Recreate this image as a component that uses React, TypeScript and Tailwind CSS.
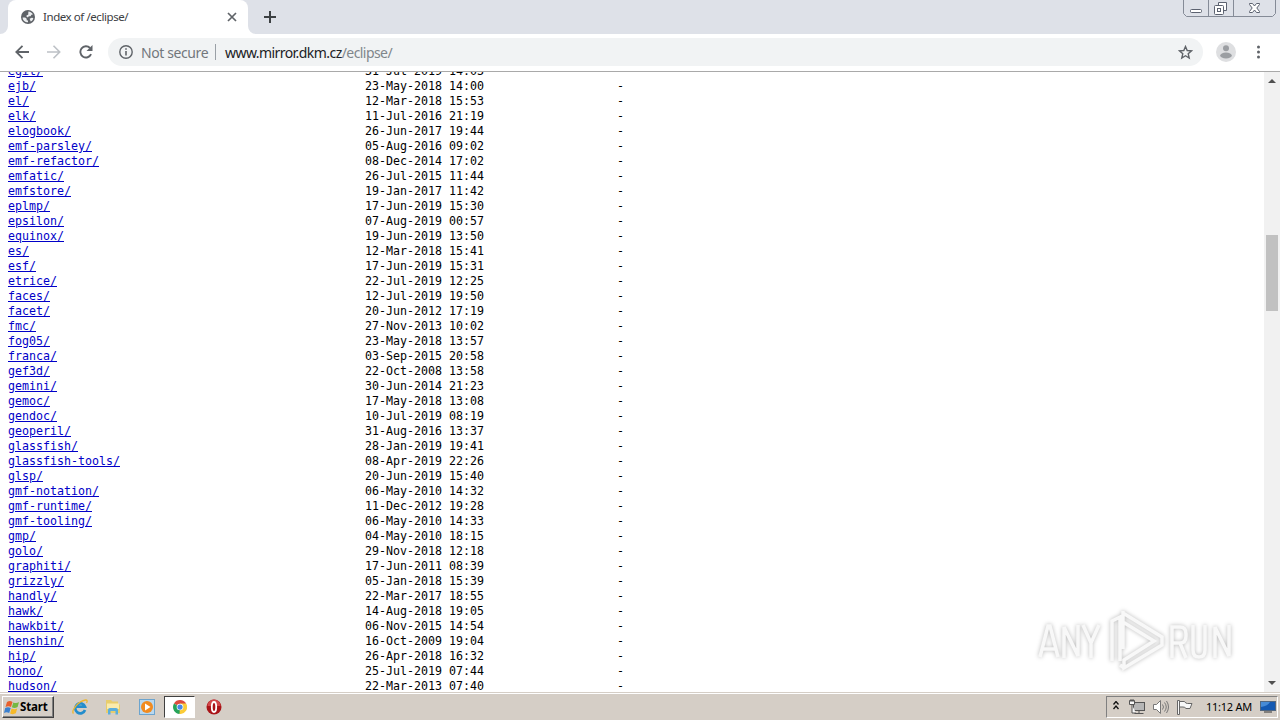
import type { ReactNode } from "react";

type Entry = [name: string, date: string];

const entries: Entry[] = [
  ["egit/", "31-Jul-2019 14:03"],
  ["ejb/", "23-May-2018 14:00"],
  ["el/", "12-Mar-2018 15:53"],
  ["elk/", "11-Jul-2016 21:19"],
  ["elogbook/", "26-Jun-2017 19:44"],
  ["emf-parsley/", "05-Aug-2016 09:02"],
  ["emf-refactor/", "08-Dec-2014 17:02"],
  ["emfatic/", "26-Jul-2015 11:44"],
  ["emfstore/", "19-Jan-2017 11:42"],
  ["eplmp/", "17-Jun-2019 15:30"],
  ["epsilon/", "07-Aug-2019 00:57"],
  ["equinox/", "19-Jun-2019 13:50"],
  ["es/", "12-Mar-2018 15:41"],
  ["esf/", "17-Jun-2019 15:31"],
  ["etrice/", "22-Jul-2019 12:25"],
  ["faces/", "12-Jul-2019 19:50"],
  ["facet/", "20-Jun-2012 17:19"],
  ["fmc/", "27-Nov-2013 10:02"],
  ["fog05/", "23-May-2018 13:57"],
  ["franca/", "03-Sep-2015 20:58"],
  ["gef3d/", "22-Oct-2008 13:58"],
  ["gemini/", "30-Jun-2014 21:23"],
  ["gemoc/", "17-May-2018 13:08"],
  ["gendoc/", "10-Jul-2019 08:19"],
  ["geoperil/", "31-Aug-2016 13:37"],
  ["glassfish/", "28-Jan-2019 19:41"],
  ["glassfish-tools/", "08-Apr-2019 22:26"],
  ["glsp/", "20-Jun-2019 15:40"],
  ["gmf-notation/", "06-May-2010 14:32"],
  ["gmf-runtime/", "11-Dec-2012 19:28"],
  ["gmf-tooling/", "06-May-2010 14:33"],
  ["gmp/", "04-May-2010 18:15"],
  ["golo/", "29-Nov-2018 12:18"],
  ["graphiti/", "17-Jun-2011 08:39"],
  ["grizzly/", "05-Jan-2018 15:39"],
  ["handly/", "22-Mar-2017 18:55"],
  ["hawk/", "14-Aug-2018 19:05"],
  ["hawkbit/", "06-Nov-2015 14:54"],
  ["henshin/", "16-Oct-2009 19:04"],
  ["hip/", "26-Apr-2018 16:32"],
  ["hono/", "25-Jul-2019 07:44"],
  ["hudson/", "22-Mar-2013 07:40"],
];

function GlobeIcon() {
  return (
    <svg className="ml-[13px] size-[14px]" viewBox="0 0 14 14">
      <circle cx="7" cy="7" r="7" fill="#5f6368" />
      <path
        d="M1.600 7.400h2.600l1.500 1.400v1.500l1.300.2v1.800C4 12.300 1.700 10.200 1.600 7.400ZM7.400 1.600c2 .2 3.700 1.300 4.500 3l-1.500.2-.8 1.400H7.800l-.9 1.200-1.500-.8.3-1.300 1.500-.5ZM8.600 8.700l2-.9 1.700.1c-.2 1.600-1.200 3-2.600 3.700Z"
        fill="#eceef0"
      />
    </svg>
  );
}

function BrowserTab() {
  return (
    <div className="relative ml-2 flex h-[34px] w-[240px] items-center rounded-t-lg bg-white">
      <GlobeIcon />
      <span className="ml-2 w-[86px] text-[11.5px] tracking-[-0.43px] whitespace-nowrap text-[#3c4043]">
        Index of /eclipse/
      </span>
      <svg className="ml-[98px] size-[10px]" viewBox="0 0 10 10" stroke="#5f6368" strokeWidth="1.700">
        <path d="m1 1 8 8M9 1 1 9" />
      </svg>
      <svg className="absolute bottom-0 -left-2 size-2" viewBox="0 0 8 8">
        <path d="M8 0v8H0a8 8 0 0 0 8-8Z" fill="#fff" />
      </svg>
      <svg className="absolute -right-2 bottom-0 size-2" viewBox="0 0 8 8">
        <path d="M0 0v8h8a8 8 0 0 1-8-8Z" fill="#fff" />
      </svg>
    </div>
  );
}

function WindowControls() {
  return (
    <svg
      className="mr-1 ml-auto h-[17px] w-[93px] self-start"
      viewBox="0 0 93 17"
      fill="none"
      stroke="#5c6270"
    >
      <path d="M.5 0v13.500l3 3h86l3-3V0M25.500 0v16M50.500 0v16" stroke="#858b97" />
      <rect x="7.500" y="9.500" width="11" height="3" rx="1" fill="#fff" />
      <path d="M35.500 5.500v-3h8v8h-3" fill="#fff" />
      <rect x="31.500" y="5.500" width="9" height="9" rx="1" fill="#fff" />
      <rect x="34.500" y="8.500" width="3" height="3" />
      <path
        d="M66.500 3.500h3l2 2.500 2-2.500h3v1l-2.700 3.500 2.700 3.500v1h-3l-2-2.500-2 2.500h-3v-1l2.700-3.500-2.700-3.500Z"
        fill="#fff"
      />
    </svg>
  );
}

function TabStrip() {
  return (
    <div className="flex h-[34px] bg-[#dee1e8]">
      <BrowserTab />
      <svg className="mt-[11px] ml-4 size-3" viewBox="0 0 12 12" stroke="#3c4043" strokeWidth="2">
        <path d="M6 0v12M0 6h12" />
      </svg>
      <WindowControls />
    </div>
  );
}

function Toolbar() {
  return (
    <div className="flex h-[38px] items-center border-b border-[#a9a9a9] bg-white pb-px">
      <svg className="ml-[15px] size-[14px]" viewBox="0 0 14 14" fill="none" stroke="#5f6368" strokeWidth="1.800">
        <path d="M14 7H1.500M7.500.8 1.300 7l6.200 6.200" />
      </svg>
      <svg className="ml-[18px] size-[14px]" viewBox="0 0 14 14" fill="none" stroke="#bdc1c6" strokeWidth="1.600">
        <path d="M0 7h12.500M6.500.8 12.700 7l-6.200 6.200" />
      </svg>
      <svg className="ml-[18px] size-[14px]" viewBox="0 0 14 14">
        <path d="M12.100 9.200A5.600 5.600 0 1 1 11 3" fill="none" stroke="#5f6368" strokeWidth="1.900" />
        <path d="M13.500 0v6h-6Z" fill="#5f6368" />
      </svg>
      <div className="ml-[15px] flex h-7 w-[1095px] items-center rounded-full bg-[#f1f3f4] text-[14px]">
        <svg className="ml-[11px] size-[14px]" viewBox="0 0 14 14" fill="none" stroke="#5f6368" strokeWidth="1.400">
          <circle cx="7" cy="7" r="6.200" />
          <path d="M7 6v4.500M7 3.300v1.500" strokeWidth="1.600" />
        </svg>
        <span className="ml-2 w-[74px] tracking-[-0.400px] whitespace-nowrap text-[#73777c]">
          Not secure
        </span>
        <span className="mr-[9px] h-4 w-px bg-[#9aa0a6]" />
        <span className="tracking-[-0.560px] whitespace-nowrap text-[#202124]">
          www.mirror.dkm.cz<span className="text-[#80868b]">/eclipse/</span>
        </span>
        <svg
          className="mr-[10px] ml-auto size-[15px]"
          viewBox="0 0 15 15"
          fill="none"
          stroke="#5f6368"
          strokeWidth="1.400"
        >
          <path d="m7.500 1.500 1.700 4 4.300.4-3.300 2.800 1 4.300-3.700-2.300L3.800 13l1-4.300L1.500 5.900l4.300-.4Z" />
        </svg>
      </div>
      <svg className="ml-[13px] size-5" viewBox="0 0 20 20">
        <circle cx="10" cy="10" r="10" fill="#dedfe1" />
        <circle cx="10" cy="6.200" r="3" fill="#9b9ea2" />
        <ellipse cx="10" cy="13.500" rx="5.800" ry="3" fill="#9b9ea2" />
      </svg>
      <svg className="ml-[21px] h-[14px] w-1" viewBox="0 0 4 14" fill="#5f6368">
        <circle cx="1.500" cy="2" r="1.500" />
        <circle cx="1.500" cy="7" r="1.500" />
        <circle cx="1.500" cy="12" r="1.500" />
      </svg>
    </div>
  );
}

function Listing() {
  return (
    <div className="-mt-2 min-w-0 flex-1 pl-2 font-['DejaVu_Sans_Mono',monospace] text-[11.63px] leading-[15px] text-black">
      {entries.map(([name, date]) => (
        <div key={name} className="flex h-[15px] whitespace-pre">
          <span className="w-[357px]">
            <a className="text-[#0000c8] underline underline-offset-1">{name}</a>
          </span>
          <span className="w-[252px]">{date}</span>
          <span>-</span>
        </div>
      ))}
    </div>
  );
}

function Scrollbar() {
  return (
    <div className="flex w-4 flex-col items-center bg-[#f1f1f1]">
      <svg className="mt-[7px] h-1 w-2" viewBox="0 0 8 4" fill="#505050">
        <path d="M0 4h8L4 0Z" />
      </svg>
      <div className="mt-[152px] h-[76px] w-3 bg-[#c1c1c1]" />
      <svg className="mt-auto mb-[7px] h-1 w-2" viewBox="0 0 8 4" fill="#505050">
        <path d="M0 0h8L4 4Z" />
      </svg>
    </div>
  );
}

function Watermark() {
  return (
    <svg
      className="absolute right-8 bottom-[14px] h-[74px] w-[220px] drop-shadow-[0_0_2px_rgba(0,0,0,0.28)]"
      viewBox="0 0 220 74"
      fill="none"
      stroke="#f8f8f8"
      strokeWidth="3.500"
    >
      <path d="m12 53 8-31h2l8 31M15 45h12M36 54V23l14 29V21M55 21l8 18 8-18M63 38v16" />
      <path d="M84 57V17l8-4v44M95 7v38M95 9l39 24v8L96 64v-8l30-19-31-19M96 64l-4-3" />
      <path d="M144 54V23h8q6 0 6 7v2q0 7-6 7h-8M152 39l6 15M165 21v25q0 7 6 7t6-7V21M187 54V23l14 29V21" />
    </svg>
  );
}

function TaskButton({ children }: { children: ReactNode }) {
  return <div className="flex h-[22px] w-[33px] items-center justify-center">{children}</div>;
}

function StartButton() {
  return (
    <div className="mt-[3px] ml-[2px] flex h-[22px] w-[52px] items-center border border-t-white border-r-[#404040] border-b-[#404040] border-l-white bg-[#d5cec6] shadow-[inset_-1px_-1px_#808080]">
      <svg className="ml-px h-[15px] w-4" viewBox="0 0 16 15">
        <path d="M3 2q3-2 5.500 0L7 7Q4.500 5.500 1.500 7Z" fill="#e8602c" />
        <path d="M9.300 2.400q3 1.500 5.700-.3L13.600 7q-3 1.800-5.700.3Z" fill="#75b843" />
        <path d="M1.200 8Q4 6.500 6.700 8l-1.500 5Q2.500 11.600 0 13Z" fill="#3b80cf" />
        <path d="M7.600 8.400q3 1.600 5.600 0L11.800 13.300q-3 1.600-5.700.1Z" fill="#f6b928" />
      </svg>
      <span className="text-[11.500px] font-bold tracking-[-0.150px] text-black">Start</span>
    </div>
  );
}

function QuickLaunch() {
  return (
    <div className="mt-[3px] ml-[9px] flex">
      <TaskButton>
        <svg className="size-4" viewBox="0 0 16 16" fill="none">
          <path d="M13 11A5 5 0 1 1 13 7.700H4" stroke="#238dcc" strokeWidth="2.700" />
          <path d="M1.500 14.500C-1 12 6 2 13.500 1c2-.2 2 1.300 1 3" stroke="#edb62d" strokeWidth="1.300" />
        </svg>
      </TaskButton>
      <TaskButton>
        <svg className="size-4" viewBox="0 0 16 16">
          <path d="M1 2.500V1h5l1.500 1.500H13v3h2V14H1Z" fill="#e8cd6c" />
          <path d="M2 4.500h12V10H2Z" fill="#faebac" />
          <path d="M3 15.500V11q0-2 2-2h6q2 0 2 2v4.500h-2.500V12h-5v3.500Z" fill="#5aaedc" />
        </svg>
      </TaskButton>
      <TaskButton>
        <svg className="ml-[2px] size-4" viewBox="0 0 16 16">
          <rect x=".5" y=".5" width="15" height="15" fill="#b9d8ef" stroke="#6ca4ce" />
          <circle cx="8" cy="8" r="6" fill="#f18b20" />
          <path d="M6 4.500 11.500 8 6 11.500Z" fill="#fff" />
        </svg>
      </TaskButton>
      <div className="mr-px ml-[2px] flex h-[22px] w-[31px] items-center justify-center border border-t-[#404040] border-r-white border-b-white border-l-[#404040] bg-white">
        <svg className="size-[14px]" viewBox="0 0 16 16">
          <path d="M8 8 1.100 4A8 8 0 0 1 15 4.100Z" fill="#dd4b3e" />
          <path d="M8 8 1.100 4A8 8 0 0 0 7.500 16L11 10Z" fill="#27a35a" />
          <path d="M8 8V4h7A8 8 0 0 1 7.500 16Z" fill="#fbcc38" />
          <circle cx="8" cy="8" r="3.800" fill="#fff" />
          <circle cx="8" cy="8" r="3" fill="#4788e5" />
        </svg>
      </div>
      <TaskButton>
        <svg className="ml-[2px] size-4" viewBox="0 0 16 16">
          <circle cx="8" cy="8" r="7.500" fill="#a91418" />
          <path d="M1.500 7a6.500 6.500 0 0 1 13 0Z" fill="#d4484a" />
          <ellipse cx="8" cy="8" rx="2.200" ry="5" fill="#a91418" stroke="#fff" strokeWidth="1.800" />
        </svg>
      </TaskButton>
    </div>
  );
}

function SystemTray() {
  return (
    <div className="mt-[3px] mr-[2px] ml-auto flex h-[22px] w-[172px] items-center border border-t-[#808080] border-r-white border-b-white border-l-[#808080]">
      <svg className="mb-[3px] ml-[6px] h-[9px] w-[6px]" viewBox="0 0 6 9" fill="none" stroke="#111" strokeWidth="1.300">
        <path d="m.5 3.500 2.500-3 2.500 3M.5 8 3 5l2.500 3" />
      </svg>
      <svg className="ml-[10px] size-4" viewBox="0 0 16 16" fill="#f8f8f8" stroke="#555">
        <rect x="4.500" y="3.500" width="11" height="8" fill="#b6b6b6" />
        <path d="M5.500 14.500h9M10 12v2M.5 1.500h5v4h-5ZM2 0v3M4 0v3M3 6v8h4" />
      </svg>
      <svg className="ml-2 size-4" viewBox="0 0 16 16" fill="none" stroke="#777">
        <path d="M.5 5.500h3l4-4v13l-4-4h-3Z" fill="#fff" />
        <path d="M9.500 5.500q2 2.500 0 5M11.500 3.500q3.500 4.500 0 9M13.500 2q4 6 0 12" />
      </svg>
      <svg className="ml-2 size-4" viewBox="0 0 16 16" fill="#f8f8f8" stroke="#666">
        <path d="M.5 1.500h2v14h-2ZM2.500 2.500h5q1 2 3 2h4.500l-2 5h-4q-1-1.500-3-1.500H2.500Z" />
      </svg>
      <span className="ml-[13px] w-[47px] text-[11px] tracking-[-0.250px] whitespace-nowrap text-black">
        11:12 AM
      </span>
      <svg className="ml-[7px] h-3 w-4" viewBox="0 0 16 12">
        <rect x=".5" y=".5" width="15" height="9" fill="#1459b2" stroke="#526780" />
        <path d="M1 1h9Q8 5 1 6Z" fill="#478bd6" />
        <path d="M4 11h8" stroke="#333" />
      </svg>
    </div>
  );
}

function Taskbar() {
  return (
    <div className="flex h-7 border-t border-[#d5cec6] bg-[#d5cec6] shadow-[inset_0_1px_#fff]">
      <StartButton />
      <QuickLaunch />
      <SystemTray />
    </div>
  );
}

export default function App() {
  return (
    <div className="flex h-[720px] w-[1280px] flex-col overflow-hidden bg-white font-['Noto_Sans','DejaVu_Sans',sans-serif]">
      <TabStrip />
      <Toolbar />
      <div className="relative flex min-h-0 flex-1 overflow-hidden">
        <Listing />
        <Scrollbar />
        <Watermark />
      </div>
      <Taskbar />
    </div>
  );
}
